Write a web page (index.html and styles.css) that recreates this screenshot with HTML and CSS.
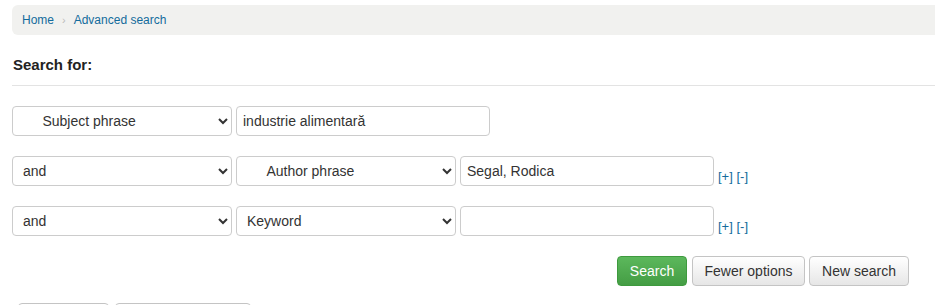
FILE: index.html
```html
<!DOCTYPE html>
<html lang="en">
<head>
  <meta charset="UTF-8">
  <title>Advanced search</title>
  <link rel="stylesheet" href="styles.css">
</head>
<body>
  <div id="main">
    <nav class="breadcrumb">
      <a href="#">Home</a>
      <span class="sep">›</span>
      <a href="#">Advanced search</a>
    </nav>

    <h4 class="legend">Search for:</h4>

    <div class="search-rows">
      <div class="search-row">
        <select class="field sel-index">
          <option>&nbsp;&nbsp;&nbsp;&nbsp;&nbsp;Subject phrase</option>
        </select>
        <input class="field query" type="text" value="industrie alimentară">
      </div>
      <div class="search-row">
        <select class="field sel-op">
          <option>and</option>
        </select>
        <select class="field sel-index">
          <option>&nbsp;&nbsp;&nbsp;&nbsp;&nbsp;Author phrase</option>
        </select>
        <input class="field query" type="text" value="Segal, Rodica">
        <span class="row-links"><a href="#">[+]</a> <a href="#">[-]</a></span>
      </div>
      <div class="search-row">
        <select class="field sel-op">
          <option>and</option>
        </select>
        <select class="field sel-index">
          <option>Keyword</option>
        </select>
        <input class="field query" type="text" value="">
        <span class="row-links"><a href="#">[+]</a> <a href="#">[-]</a></span>
      </div>
    </div>

    <div class="actions">
      <button class="btn btn-success">Search</button>
      <button class="btn btn-fewer">Fewer options</button>
      <button class="btn btn-new">New search</button>
    </div>

    <div class="more-tabs">
      <button class="btn tab-a">&nbsp;</button>
      <button class="btn tab-b">&nbsp;</button>
    </div>
  </div>
</body>
</html>
```

FILE: styles.css
```css
html, body {
  margin: 0;
  padding: 0;
  background: #fff;
  font-family: "Liberation Sans", Arial, sans-serif;
  color: #333;
  overflow: hidden;
}
#main {
  padding: 5px 0 0 12px;
}
a {
  color: #136b9c;
  text-decoration: none;
}
.breadcrumb {
  display: flex;
  align-items: center;
  height: 30px;
  margin-right: -10px;
  padding-left: 10px;
  background: #f1f1ef;
  border-radius: 6px 0 0 6px;
  font-size: 12px;
}
.breadcrumb .sep {
  color: #bbb;
  margin: 0 8px 0 8px;
  font-size: 11px;
}
.legend {
  margin: 0;
  padding: 21px 0 0 1px;
  height: 29px;
  font-size: 15px;
  font-weight: bold;
  color: #222;
  line-height: 17px;
  border-bottom: 1px solid #e3e3e3;
}
.search-rows {
  display: flex;
  flex-direction: column;
  gap: 20px;
  padding-top: 20px;
}
.search-row {
  display: flex;
  gap: 4px;
  height: 30px;
}
.field {
  box-sizing: border-box;
  height: 30px;
  border: 1px solid #ccc;
  border-radius: 4px;
  background: #fff;
  font-family: "Liberation Sans", Arial, sans-serif;
  font-size: 14px;
  color: #333;
}
select.field {
  width: 220px;
  padding: 0 6px;
}
input.field {
  width: 254px;
  padding: 0 6px;
}
.row-links {
  align-self: flex-end;
  font-size: 13px;
  line-height: 16px;
  margin-bottom: 1px;
}
.actions {
  display: flex;
  justify-content: flex-end;
  padding: 20px 26px 0 0;
}
.btn {
  box-sizing: border-box;
  height: 30px;
  padding: 0;
  border: 1px solid #c4c4c4;
  border-radius: 4px;
  background: linear-gradient(#ffffff, #e6e6e6);
  font-family: "Liberation Sans", Arial, sans-serif;
  font-size: 14px;
  color: #333;
}
.btn-success {
  width: 70px;
  border-color: #3e9a3e;
  background: linear-gradient(#5cb85c, #449d44);
  color: #fff;
}
.btn-fewer {
  width: 113px;
  margin-left: 5px;
}
.btn-new {
  width: 100px;
  margin-left: 4px;
}
.more-tabs {
  display: flex;
  gap: 6px;
  padding: 17px 0 0 6px;
}
.tab-a {
  width: 91px;
}
.tab-b {
  width: 136px;
}
```
